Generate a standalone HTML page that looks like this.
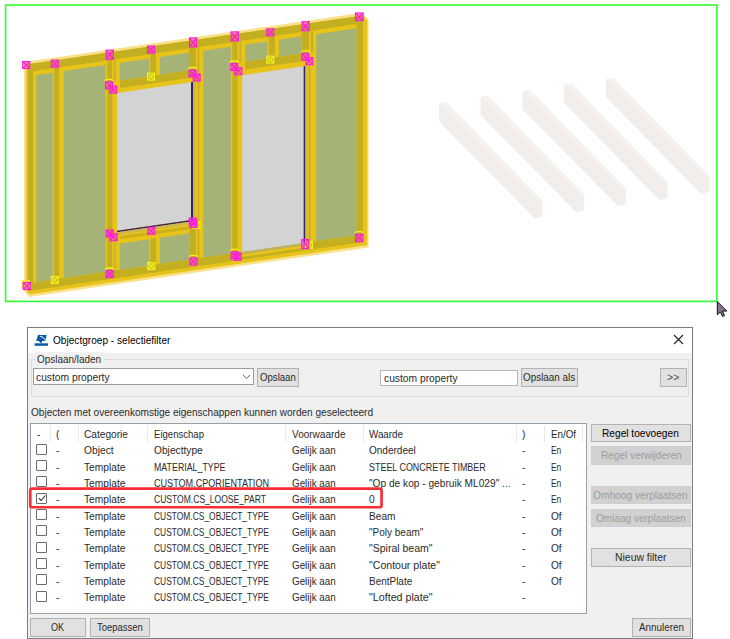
<!DOCTYPE html>
<html lang="nl"><head><meta charset="utf-8"><title>Objectgroep - selectiefilter</title>
<style>
html,body{margin:0;padding:0;background:#fff;}
body{width:730px;height:639px;position:relative;overflow:hidden;font-family:"Liberation Sans",sans-serif;font-size:11px;color:#2a2a2a;}
.cad{position:absolute;left:0;top:0;}
.dlg{position:absolute;left:26.8px;top:326.8px;width:664.5px;height:310.5px;background:#f0f0f0;border:1px solid #7c7c7c;box-sizing:content-box;}
.abs{position:absolute;left:0;top:0;width:730px;height:639px;}
.title{position:absolute;left:27.8px;top:327.8px;width:664.5px;height:25.2px;background:#fff;}
.t{position:absolute;white-space:nowrap;line-height:16px;height:16px;transform-origin:0 50%;}
.grp{position:absolute;left:30.8px;top:359px;width:658px;height:37.7px;border:1px solid #dcdcdc;box-sizing:border-box;}
.glb{position:absolute;left:35px;top:352px;width:69px;height:14px;background:#f0f0f0;}
.btn{position:absolute;box-sizing:border-box;border:1px solid #b2b2b2;background:#e1e1e1;}
.btn.d{border-color:#cfcfcf;background:#d1d1d1;}
.inp{position:absolute;box-sizing:border-box;border:1px solid #9c9c9c;background:#fff;}
.tbl{position:absolute;left:30px;top:422.5px;width:557px;height:191px;box-sizing:border-box;border:1px solid #9aa0a8;background:#fff;}
.sep{position:absolute;top:425px;width:1px;height:17px;background:#e9e9e9;}
.cb{position:absolute;width:11px;height:11px;box-sizing:border-box;border:1px solid #6a6a6a;border-radius:1px;background:#fff;}
.cb svg{position:absolute;left:-.5px;top:-.5px;}
.red{position:absolute;left:28.9px;top:487.2px;width:354px;height:21.4px;box-sizing:border-box;border:2.7px solid #f92d34;border-radius:3px;}
</style></head><body>
<svg class="cad" width="730" height="322" viewBox="0 0 730 322">
<defs>
<linearGradient id="gl" x1="0" x2="1" y1="0" y2="0"><stop offset="0" stop-color="#fdeaa8"/><stop offset="1" stop-color="#e8c319"/></linearGradient>
<linearGradient id="grr" x1="0" x2="1" y1="0" y2="0"><stop offset="0" stop-color="#e8c319"/><stop offset="1" stop-color="#fdeaa8"/></linearGradient>
</defs>
<rect x="5.6" y="5.0" width="711.3" height="296.4" fill="none" stroke="#2eff2e" stroke-width="1.6"/>
<g transform="translate(24.0,63.5) skewY(-8.306)">
<rect x="0.00" y="-1.40" width="344.50" height="235.60" fill="#fbe08a" />
<rect x="0.00" y="1.40" width="343.50" height="230.30" fill="#e8c319" />
<rect x="0.00" y="1.40" width="3.70" height="230.30" fill="url(#gl)" />
<rect x="342.30" y="1.40" width="2.20" height="230.30" fill="url(#grr)" />
<rect x="3.70" y="1.40" width="335.30" height="7.60" fill="#c3af1f" />
<rect x="3.70" y="220.20" width="335.30" height="7.80" fill="#c3af1f" />
<rect x="3.70" y="1.40" width="5.30" height="226.60" fill="#c3af1f" />
<rect x="30.00" y="1.40" width="5.30" height="226.60" fill="#c3af1f" />
<rect x="83.30" y="1.40" width="5.00" height="226.60" fill="#c3af1f" />
<rect x="208.30" y="1.40" width="5.20" height="226.60" fill="#c3af1f" />
<rect x="332.60" y="1.40" width="6.20" height="226.60" fill="#c3af1f" />
<rect x="12.30" y="13.40" width="16.40" height="206.80" fill="#a5b476" />
<rect x="39.80" y="13.40" width="41.70" height="206.80" fill="#a5b476" />
<rect x="179.30" y="13.40" width="27.50" height="206.80" fill="#a5b476" />
<rect x="292.20" y="13.40" width="40.40" height="206.80" fill="#a5b476" />
<rect x="95.90" y="13.40" width="29.20" height="17.60" fill="#a5b476" />
<rect x="136.00" y="13.40" width="29.00" height="17.60" fill="#a5b476" />
<rect x="126.30" y="9.00" width="5.70" height="22.00" fill="#c3af1f" />
<rect x="90.00" y="9.00" width="1.50" height="22.00" fill="#c3af1f" />
<rect x="165.00" y="9.00" width="7.00" height="29.50" fill="#c3af1f" />
<rect x="173.70" y="9.00" width="1.50" height="211.20" fill="#c3af1f" />
<rect x="95.90" y="31.00" width="69.10" height="7.50" fill="#c3af1f" />
<rect x="93.20" y="43.20" width="73.80" height="137.60" fill="#d3d3d3" />
<rect x="167.00" y="43.20" width="2.00" height="139.10" fill="#3a2060" />
<rect x="169.00" y="43.20" width="2.30" height="137.60" fill="#c9b24a" />
<rect x="93.20" y="180.80" width="75.80" height="1.50" fill="#3a2060" />
<rect x="93.20" y="182.30" width="73.80" height="2.70" fill="#cdb94e" />
<rect x="95.90" y="186.80" width="69.60" height="3.00" fill="#c9b01c" />
<rect x="95.90" y="194.00" width="29.20" height="26.20" fill="#a5b476" />
<rect x="136.00" y="194.00" width="29.50" height="26.20" fill="#a5b476" />
<rect x="126.30" y="194.00" width="5.70" height="26.20" fill="#c3af1f" />
<rect x="90.00" y="186.80" width="1.50" height="41.20" fill="#c3af1f" />
<rect x="165.50" y="186.80" width="6.50" height="41.20" fill="#c3af1f" />
<rect x="221.30" y="13.40" width="21.90" height="17.10" fill="#a5b476" />
<rect x="255.00" y="13.40" width="22.60" height="17.10" fill="#a5b476" />
<rect x="244.50" y="9.00" width="6.20" height="21.50" fill="#c3af1f" />
<rect x="215.50" y="9.00" width="1.50" height="21.50" fill="#c3af1f" />
<rect x="277.60" y="9.00" width="7.40" height="29.30" fill="#c3af1f" />
<rect x="287.00" y="9.00" width="2.00" height="21.50" fill="#c3af1f" />
<rect x="221.30" y="30.50" width="56.30" height="7.80" fill="#c3af1f" />
<rect x="218.20" y="43.60" width="61.50" height="176.70" fill="#d3d3d3" />
<rect x="279.70" y="43.60" width="1.60" height="176.70" fill="#3a2060" />
<rect x="281.30" y="43.60" width="1.70" height="176.70" fill="#c9b24a" />
<rect x="284.50" y="43.60" width="2.00" height="184.40" fill="#c3af1f" />
<rect x="218.20" y="220.30" width="62.80" height="2.50" fill="#bfb166" />
<rect x="218.20" y="222.80" width="62.80" height="2.50" fill="#e8c319" />
</g>
<polygon points="22,288.6 31.6,299.2 22,299.2" fill="#fff"/>
<polygon points="361.2,12.6 368.9,20.3 371,20.3 371,8 361.2,8" fill="#fff"/>
<path d="M361.6 13.6L368 20" stroke="#fbe08a" stroke-width="1.2" fill="none"/>
<path d="M24.2 289.4L31.4 297.3" stroke="#fbe08a" stroke-width="1.3" fill="none"/>
<g stroke="#ff1ae0" stroke-width="1.1" fill="rgba(255,40,225,0.38)"><rect x="22.7" y="61.5" width="7.0" height="7.0"/><path d="M22.7 61.5L29.7 68.5M29.7 61.5L22.7 68.5"/></g>
<g stroke="#ff1ae0" stroke-width="1.1" fill="rgba(255,40,225,0.38)"><rect x="51.3" y="60.1" width="7.0" height="7.0"/><path d="M51.3 60.1L58.3 67.1M58.3 60.1L51.3 67.1"/></g>
<g stroke="#ff1ae0" stroke-width="1.1" fill="rgba(255,40,225,0.38)"><rect x="106.1" y="50.2" width="7.2" height="9.0"/><path d="M106.1 50.2L113.3 59.2M113.3 50.2L106.1 59.2"/></g>
<g stroke="#ff1ae0" stroke-width="1.1" fill="rgba(255,40,225,0.38)"><rect x="147.5" y="46.1" width="7.0" height="7.0"/><path d="M147.5 46.1L154.5 53.1M154.5 46.1L147.5 53.1"/></g>
<g stroke="#ff1ae0" stroke-width="1.1" fill="rgba(255,40,225,0.38)"><rect x="189.5" y="37.9" width="7.0" height="9.0"/><path d="M189.5 37.9L196.5 46.9M196.5 37.9L189.5 46.9"/></g>
<g stroke="#ff1ae0" stroke-width="1.1" fill="rgba(255,40,225,0.38)"><rect x="231.1" y="31.9" width="7.2" height="9.0"/><path d="M231.1 31.9L238.3 40.9M238.3 31.9L231.1 40.9"/></g>
<g stroke="#ff1ae0" stroke-width="1.1" fill="rgba(255,40,225,0.38)"><rect x="266.8" y="28.8" width="7.0" height="7.0"/><path d="M266.8 28.8L273.8 35.8M273.8 28.8L266.8 35.8"/></g>
<g stroke="#ff1ae0" stroke-width="1.1" fill="rgba(255,40,225,0.38)"><rect x="302.1" y="21.7" width="7.0" height="9.0"/><path d="M302.1 21.7L309.1 30.7M309.1 21.7L302.1 30.7"/></g>
<g stroke="#ff1ae0" stroke-width="1.1" fill="rgba(255,40,225,0.38)"><rect x="355.5" y="13.0" width="7.6" height="7.6"/><path d="M355.5 13.0L363.1 20.6M363.1 13.0L355.5 20.6"/></g>
<g stroke="#f2f01c" stroke-width="1.1" fill="rgba(240,240,30,0.2)"><rect x="147.5" y="73.2" width="7.0" height="7.0"/><path d="M147.5 73.2L154.5 80.2M154.5 73.2L147.5 80.2"/></g>
<path d="M105.0 81.3q0 -2 2 -2h4q2 0 2 2" stroke="#f2f01c" stroke-width="1.3" fill="none"/>
<g stroke="#ff1ae0" stroke-width="1.1" fill="rgba(255,40,225,0.38)"><rect x="105.5" y="81.8" width="7.0" height="7.0"/><path d="M105.5 81.8L112.5 88.8M112.5 81.8L105.5 88.8"/></g>
<g stroke="#ff1ae0" stroke-width="1.1" fill="rgba(255,40,225,0.38)"><rect x="109.7" y="86.1" width="7.0" height="7.0"/><path d="M109.7 86.1L116.7 93.1M116.7 86.1L109.7 93.1"/></g>
<path d="M188.6 69.5q0 -2 2 -2h4q2 0 2 2" stroke="#f2f01c" stroke-width="1.3" fill="none"/>
<g stroke="#ff1ae0" stroke-width="1.1" fill="rgba(255,40,225,0.38)"><rect x="189.1" y="70.0" width="7.0" height="7.0"/><path d="M189.1 70.0L196.1 77.0M196.1 70.0L189.1 77.0"/></g>
<g stroke="#ff1ae0" stroke-width="1.1" fill="rgba(255,40,225,0.38)"><rect x="193.2" y="74.1" width="7.0" height="7.0"/><path d="M193.2 74.1L200.2 81.1M200.2 74.1L193.2 81.1"/></g>
<g stroke="#f2f01c" stroke-width="1.1" fill="rgba(240,240,30,0.2)"><rect x="266.8" y="56.1" width="7.0" height="7.0"/><path d="M266.8 56.1L273.8 63.1M273.8 56.1L266.8 63.1"/></g>
<path d="M230.3 63.0q0 -2 2 -2h4q2 0 2 2" stroke="#f2f01c" stroke-width="1.3" fill="none"/>
<g stroke="#ff1ae0" stroke-width="1.1" fill="rgba(255,40,225,0.38)"><rect x="230.8" y="63.5" width="7.0" height="7.0"/><path d="M230.8 63.5L237.8 70.5M237.8 63.5L230.8 70.5"/></g>
<g stroke="#ff1ae0" stroke-width="1.1" fill="rgba(255,40,225,0.38)"><rect x="234.9" y="67.7" width="7.0" height="7.0"/><path d="M234.9 67.7L241.9 74.7M241.9 67.7L234.9 74.7"/></g>
<path d="M301.3 52.8q0 -2 2 -2h4q2 0 2 2" stroke="#f2f01c" stroke-width="1.3" fill="none"/>
<g stroke="#ff1ae0" stroke-width="1.1" fill="rgba(255,40,225,0.38)"><rect x="301.8" y="53.3" width="7.0" height="7.0"/><path d="M301.8 53.3L308.8 60.3M308.8 53.3L301.8 60.3"/></g>
<g stroke="#ff1ae0" stroke-width="1.1" fill="rgba(255,40,225,0.38)"><rect x="305.9" y="57.7" width="7.0" height="7.0"/><path d="M305.9 57.7L312.9 64.7M312.9 57.7L305.9 64.7"/></g>
<g stroke="#ff1ae0" stroke-width="1.1" fill="rgba(255,40,225,0.38)"><rect x="106.2" y="230.0" width="7.0" height="7.0"/><path d="M106.2 230.0L113.2 237.0M113.2 230.0L106.2 237.0"/></g>
<g stroke="#ff1ae0" stroke-width="1.1" fill="rgba(255,40,225,0.38)"><rect x="110.1" y="233.7" width="7.0" height="7.0"/><path d="M110.1 233.7L117.1 240.7M117.1 233.7L110.1 240.7"/></g>
<g stroke="#ff1ae0" stroke-width="1.1" fill="rgba(255,40,225,0.38)"><rect x="147.8" y="227.3" width="7.0" height="7.0"/><path d="M147.8 227.3L154.8 234.3M154.8 227.3L147.8 234.3"/></g>
<g stroke="#f2f01c" stroke-width="1.1" fill="rgba(240,240,30,0.2)"><rect x="193.0" y="221.5" width="7.0" height="7.0"/><path d="M193.0 221.5L200.0 228.5M200.0 221.5L193.0 228.5"/></g>
<g stroke="#ff1ae0" stroke-width="1.1" fill="rgba(255,40,225,0.38)"><rect x="189.2" y="218.0" width="7.0" height="7.0"/><path d="M189.2 218.0L196.2 225.0M196.2 218.0L189.2 225.0"/></g>
<g stroke="#ff1ae0" stroke-width="1.1" fill="rgba(255,40,225,0.38)"><rect x="190.0" y="220.5" width="7.0" height="7.0"/><path d="M190.0 220.5L197.0 227.5M197.0 220.5L190.0 227.5"/></g>
<g stroke="#f2f01c" stroke-width="1.1" fill="rgba(240,240,30,0.2)"><rect x="22.2" y="280.5" width="7.0" height="7.0"/><path d="M22.2 280.5L29.2 287.5M29.2 280.5L22.2 287.5"/></g>
<g stroke="#ff1ae0" stroke-width="1.1" fill="rgba(255,40,225,0.38)"><rect x="23.2" y="282.5" width="7.0" height="7.0"/><path d="M23.2 282.5L30.2 289.5M30.2 282.5L23.2 289.5"/></g>
<g stroke="#f2f01c" stroke-width="1.1" fill="rgba(240,240,30,0.2)"><rect x="51.3" y="276.5" width="7.0" height="7.0"/><path d="M51.3 276.5L58.3 283.5M58.3 276.5L51.3 283.5"/></g>
<path d="M105.7 270.0q0 -2 2 -2h4q2 0 2 2" stroke="#f2f01c" stroke-width="1.3" fill="none"/>
<g stroke="#ff1ae0" stroke-width="1.1" fill="rgba(255,40,225,0.38)"><rect x="106.2" y="270.5" width="7.0" height="7.0"/><path d="M106.2 270.5L113.2 277.5M113.2 270.5L106.2 277.5"/></g>
<g stroke="#f2f01c" stroke-width="1.1" fill="rgba(240,240,30,0.2)"><rect x="147.8" y="262.5" width="7.0" height="7.0"/><path d="M147.8 262.5L154.8 269.5M154.8 262.5L147.8 269.5"/></g>
<path d="M189.5 257.4q0 -2 2 -2h4q2 0 2 2" stroke="#f2f01c" stroke-width="1.3" fill="none"/>
<g stroke="#ff1ae0" stroke-width="1.1" fill="rgba(255,40,225,0.38)"><rect x="190.0" y="257.9" width="7.0" height="7.0"/><path d="M190.0 257.9L197.0 264.9M197.0 257.9L190.0 264.9"/></g>
<path d="M230.6 251.3q0 -2 2 -2h4q2 0 2 2" stroke="#f2f01c" stroke-width="1.3" fill="none"/>
<g stroke="#ff1ae0" stroke-width="1.1" fill="rgba(255,40,225,0.38)"><rect x="231.1" y="251.8" width="7.0" height="7.0"/><path d="M231.1 251.8L238.1 258.8M238.1 251.8L231.1 258.8"/></g>
<g stroke="#ff1ae0" stroke-width="1.1" fill="rgba(255,40,225,0.38)"><rect x="234.1" y="253.3" width="7.0" height="7.0"/><path d="M234.1 253.3L241.1 260.3M241.1 253.3L234.1 260.3"/></g>
<g stroke="#f2f01c" stroke-width="1.1" fill="rgba(240,240,30,0.2)"><rect x="305.5" y="241.5" width="7.0" height="7.0"/><path d="M305.5 241.5L312.5 248.5M312.5 241.5L305.5 248.5"/></g>
<g stroke="#ff1ae0" stroke-width="1.1" fill="rgba(255,40,225,0.38)"><rect x="301.8" y="239.5" width="7.0" height="9.0"/><path d="M301.8 239.5L308.8 248.5M308.8 239.5L301.8 248.5"/></g>
<path d="M355.0 233.7q0 -2 2 -2h4q2 0 2 2" stroke="#f2f01c" stroke-width="1.3" fill="none"/>
<g stroke="#ff1ae0" stroke-width="1.1" fill="rgba(255,40,225,0.38)"><rect x="355.5" y="234.2" width="7.5" height="7.5"/><path d="M355.5 234.2L363.0 241.7M363.0 234.2L355.5 241.7"/></g>
<polygon points="439.0,104.5 441.0,103.0 446.4,102.3 542.6,200.7 542.6,215.6 540.5,217.4 534.6,218.4 439.0,121.6" fill="#f1eeeb"/>
<polygon points="441.0,103.0 446.4,102.3 542.6,200.7 540.0,202.5" fill="#f5f2ef"/>
<polygon points="480.6,98.3 482.6,96.8 488.0,96.1 584.2,194.5 584.2,209.4 582.1,211.2 576.2,212.2 480.6,115.4" fill="#f1eeeb"/>
<polygon points="482.6,96.8 488.0,96.1 584.2,194.5 581.6,196.3" fill="#f5f2ef"/>
<polygon points="522.3,92.2 524.3,90.7 529.7,90.0 625.9,188.4 625.9,203.3 623.8,205.1 617.9,206.1 522.3,109.3" fill="#f1eeeb"/>
<polygon points="524.3,90.7 529.7,90.0 625.9,188.4 623.3,190.2" fill="#f5f2ef"/>
<polygon points="564.0,86.0 566.0,84.5 571.3,83.8 667.5,182.2 667.5,197.1 665.5,198.9 659.5,199.9 564.0,103.1" fill="#f1eeeb"/>
<polygon points="566.0,84.5 571.3,83.8 667.5,182.2 665.0,184.1" fill="#f5f2ef"/>
<polygon points="605.6,79.9 607.6,78.4 613.0,77.7 709.2,176.1 709.2,191.0 707.1,192.8 701.2,193.8 605.6,97.0" fill="#f1eeeb"/>
<polygon points="607.6,78.4 613.0,77.7 709.2,176.1 706.6,177.9" fill="#f5f2ef"/>
<path d="M717.3 301.6v13.2l3.1-2.9 2.1 4.6 2-0.9-2.1-4.5h4.4z" fill="#85768f" stroke="#111" stroke-width="1" stroke-linejoin="miter"/>
</svg>
<div class="dlg"></div>
<div class="abs">
<div class="title"></div>
<svg style="position:absolute;left:34px;top:334px" width="15" height="13" viewBox="34 334 15 13"><polygon points="38,335.1 46.7,335.1 45.2,341.1 36.2,341.1" fill="#0a5ba6"/><path d="M40.2 336.3q3.6 0.4 4.6 3.4" stroke="#fff" stroke-width="1" fill="none"/><polygon points="38.6,341.1 42.2,341.1 41.3,343.4" fill="#0a5ba6"/><rect x="34.7" y="343.3" width="13.4" height="2.5" fill="#0a5ba6"/></svg>
<span class="t " style="left:53.0px;top:331.5px;transform:scaleX(0.9188);color:#000;">Objectgroep - selectiefilter</span>
<svg style="position:absolute;left:673px;top:334px" width="11" height="11" viewBox="0 0 11 11"><path d="M1 1l9 9M10 1l-9 9" stroke="#222" stroke-width="1.1" fill="none"/></svg>
<div class="grp"></div>
<div class="glb"></div>
<span class="t " style="left:37.2px;top:350.7px;transform:scaleX(0.9022);">Opslaan/laden</span>
<div class="inp" style="left:33px;top:368px;width:221px;height:17px"></div>
<span class="t " style="left:36.4px;top:368.6px;transform:scaleX(0.9333);">custom property</span>
<svg style="position:absolute;left:242.3px;top:374.3px" width="9" height="6" viewBox="0 0 9 6"><path d="M1 1l3.5 3.4L8 1" stroke="#666" stroke-width="1" fill="none"/></svg>
<div class="inp" style="left:380px;top:370px;width:137.5px;height:15.5px;border-color:#b5b5b5"></div>
<span class="t " style="left:384.1px;top:369.8px;transform:scaleX(0.9333);">custom property</span>
<div class="btn" style="left:659.5px;top:368px;width:27px;height:18.5px"></div>
<span class="t " style="left:667.1px;top:369.2px;transform:scaleX(0.9574);color:#4a4a4a;">&gt;&gt;</span>
<span class="t " style="left:30.9px;top:403.9px;transform:scaleX(0.9139);">Objecten met overeenkomstige eigenschappen kunnen worden geselecteerd</span>
<div class="tbl"></div>
<span class="t " style="left:36.5px;top:425.8px;transform:scaleX(0.9200);">-</span>
<span class="t " style="left:55.6px;top:425.8px;transform:scaleX(0.9200);">(</span>
<span class="t " style="left:84.1px;top:425.8px;transform:scaleX(0.9205);">Categorie</span>
<span class="t " style="left:153.6px;top:425.8px;transform:scaleX(0.8698);">Eigenschap</span>
<span class="t " style="left:291.8px;top:425.8px;transform:scaleX(0.9114);">Voorwaarde</span>
<span class="t " style="left:369.3px;top:425.8px;transform:scaleX(0.8922);">Waarde</span>
<span class="t " style="left:521.6px;top:425.8px;transform:scaleX(0.9200);">)</span>
<span class="t " style="left:551.0px;top:425.8px;transform:scaleX(0.8889);">En/Of</span>
<i class="sep" style="left:49.8px"></i>
<i class="sep" style="left:77.9px"></i>
<i class="sep" style="left:147.0px"></i>
<i class="sep" style="left:285.0px"></i>
<i class="sep" style="left:363.3px"></i>
<i class="sep" style="left:515.9px"></i>
<i class="sep" style="left:544.3px"></i>
<i class="sep" style="left:582.0px"></i>
<i class="cb" style="left:36.4px;top:443.7px"></i>
<span class="t " style="left:56.2px;top:442.4px;transform:scaleX(0.9200);">-</span>
<span class="t " style="left:84.1px;top:442.4px;transform:scaleX(0.9311);">Object</span>
<span class="t " style="left:153.6px;top:442.4px;transform:scaleX(0.9281);">Objecttype</span>
<span class="t " style="left:291.8px;top:442.4px;transform:scaleX(0.8934);">Gelijk aan</span>
<span class="t " style="left:369.3px;top:442.4px;transform:scaleX(0.9111);">Onderdeel</span>
<span class="t " style="left:522.1px;top:442.4px;transform:scaleX(0.9200);">-</span>
<span class="t " style="left:551.0px;top:442.4px;transform:scaleX(0.7655);">En</span>
<i class="cb" style="left:36.4px;top:460.0px"></i>
<span class="t " style="left:56.2px;top:458.7px;transform:scaleX(0.9200);">-</span>
<span class="t " style="left:84.1px;top:458.7px;transform:scaleX(0.9276);">Template</span>
<span class="t " style="left:153.6px;top:458.7px;transform:scaleX(0.8030);">MATERIAL_TYPE</span>
<span class="t " style="left:291.8px;top:458.7px;transform:scaleX(0.8934);">Gelijk aan</span>
<span class="t " style="left:369.3px;top:458.7px;transform:scaleX(0.8125);">STEEL CONCRETE TIMBER</span>
<span class="t " style="left:522.1px;top:458.7px;transform:scaleX(0.9200);">-</span>
<span class="t " style="left:551.0px;top:458.7px;transform:scaleX(0.7655);">En</span>
<i class="cb" style="left:36.4px;top:476.4px"></i>
<span class="t " style="left:56.2px;top:475.0px;transform:scaleX(0.9200);">-</span>
<span class="t " style="left:84.1px;top:475.0px;transform:scaleX(0.9276);">Template</span>
<span class="t " style="left:153.6px;top:475.0px;transform:scaleX(0.8253);">CUSTOM.CPORIENTATION</span>
<span class="t " style="left:291.8px;top:475.0px;transform:scaleX(0.8934);">Gelijk aan</span>
<span class="t " style="left:369.3px;top:475.0px;transform:scaleX(0.9229);">"Op de kop - gebruik ML029" ...</span>
<span class="t " style="left:522.1px;top:475.0px;transform:scaleX(0.9200);">-</span>
<span class="t " style="left:551.0px;top:475.0px;transform:scaleX(0.7655);">En</span>
<i class="cb on" style="left:36.4px;top:492.7px"><svg width="10" height="10" viewBox="0 0 10 10"><path d="M1.8 5.2l2.3 2.3l4.2-5" stroke="#333" stroke-width="1.1" fill="none"/></svg></i>
<span class="t " style="left:56.2px;top:491.4px;transform:scaleX(0.9200);">-</span>
<span class="t " style="left:84.1px;top:491.4px;transform:scaleX(0.9276);">Template</span>
<span class="t " style="left:153.6px;top:491.4px;transform:scaleX(0.7764);">CUSTOM.CS_LOOSE_PART</span>
<span class="t " style="left:291.8px;top:491.4px;transform:scaleX(0.8934);">Gelijk aan</span>
<span class="t " style="left:369.3px;top:491.4px;transform:scaleX(0.9200);">0</span>
<span class="t " style="left:522.1px;top:491.4px;transform:scaleX(0.9200);">-</span>
<span class="t " style="left:551.0px;top:491.4px;transform:scaleX(0.7655);">En</span>
<i class="cb" style="left:36.4px;top:509.0px"></i>
<span class="t " style="left:56.2px;top:507.7px;transform:scaleX(0.9200);">-</span>
<span class="t " style="left:84.1px;top:507.7px;transform:scaleX(0.9276);">Template</span>
<span class="t " style="left:153.6px;top:507.7px;transform:scaleX(0.7658);">CUSTOM.CS_OBJECT_TYPE</span>
<span class="t " style="left:291.8px;top:507.7px;transform:scaleX(0.8934);">Gelijk aan</span>
<span class="t " style="left:369.3px;top:507.7px;transform:scaleX(0.9222);">Beam</span>
<span class="t " style="left:522.1px;top:507.7px;transform:scaleX(0.9200);">-</span>
<span class="t " style="left:551.0px;top:507.7px;transform:scaleX(0.9200);">Of</span>
<i class="cb" style="left:36.4px;top:525.4px"></i>
<span class="t " style="left:56.2px;top:524.0px;transform:scaleX(0.9200);">-</span>
<span class="t " style="left:84.1px;top:524.0px;transform:scaleX(0.9276);">Template</span>
<span class="t " style="left:153.6px;top:524.0px;transform:scaleX(0.7658);">CUSTOM.CS_OBJECT_TYPE</span>
<span class="t " style="left:291.8px;top:524.0px;transform:scaleX(0.8934);">Gelijk aan</span>
<span class="t " style="left:369.3px;top:524.0px;transform:scaleX(0.9100);">"Poly beam"</span>
<span class="t " style="left:522.1px;top:524.0px;transform:scaleX(0.9200);">-</span>
<span class="t " style="left:551.0px;top:524.0px;transform:scaleX(0.9200);">Of</span>
<i class="cb" style="left:36.4px;top:541.7px"></i>
<span class="t " style="left:56.2px;top:540.4px;transform:scaleX(0.9200);">-</span>
<span class="t " style="left:84.1px;top:540.4px;transform:scaleX(0.9276);">Template</span>
<span class="t " style="left:153.6px;top:540.4px;transform:scaleX(0.7658);">CUSTOM.CS_OBJECT_TYPE</span>
<span class="t " style="left:291.8px;top:540.4px;transform:scaleX(0.8934);">Gelijk aan</span>
<span class="t " style="left:369.3px;top:540.4px;transform:scaleX(0.9549);">"Spiral beam"</span>
<span class="t " style="left:522.1px;top:540.4px;transform:scaleX(0.9200);">-</span>
<span class="t " style="left:551.0px;top:540.4px;transform:scaleX(0.9200);">Of</span>
<i class="cb" style="left:36.4px;top:558.0px"></i>
<span class="t " style="left:56.2px;top:556.7px;transform:scaleX(0.9200);">-</span>
<span class="t " style="left:84.1px;top:556.7px;transform:scaleX(0.9276);">Template</span>
<span class="t " style="left:153.6px;top:556.7px;transform:scaleX(0.7658);">CUSTOM.CS_OBJECT_TYPE</span>
<span class="t " style="left:291.8px;top:556.7px;transform:scaleX(0.8934);">Gelijk aan</span>
<span class="t " style="left:369.3px;top:556.7px;transform:scaleX(0.9614);">"Contour plate"</span>
<span class="t " style="left:522.1px;top:556.7px;transform:scaleX(0.9200);">-</span>
<span class="t " style="left:551.0px;top:556.7px;transform:scaleX(0.9200);">Of</span>
<i class="cb" style="left:36.4px;top:574.3px"></i>
<span class="t " style="left:56.2px;top:573.0px;transform:scaleX(0.9200);">-</span>
<span class="t " style="left:84.1px;top:573.0px;transform:scaleX(0.9276);">Template</span>
<span class="t " style="left:153.6px;top:573.0px;transform:scaleX(0.7658);">CUSTOM.CS_OBJECT_TYPE</span>
<span class="t " style="left:291.8px;top:573.0px;transform:scaleX(0.8934);">Gelijk aan</span>
<span class="t " style="left:369.3px;top:573.0px;transform:scaleX(0.9057);">BentPlate</span>
<span class="t " style="left:522.1px;top:573.0px;transform:scaleX(0.9200);">-</span>
<span class="t " style="left:551.0px;top:573.0px;transform:scaleX(0.9200);">Of</span>
<i class="cb" style="left:36.4px;top:590.7px"></i>
<span class="t " style="left:56.2px;top:589.4px;transform:scaleX(0.9200);">-</span>
<span class="t " style="left:84.1px;top:589.4px;transform:scaleX(0.9276);">Template</span>
<span class="t " style="left:153.6px;top:589.4px;transform:scaleX(0.7658);">CUSTOM.CS_OBJECT_TYPE</span>
<span class="t " style="left:291.8px;top:589.4px;transform:scaleX(0.8934);">Gelijk aan</span>
<span class="t " style="left:369.3px;top:589.4px;transform:scaleX(0.9725);">"Lofted plate"</span>
<span class="t " style="left:522.1px;top:589.4px;transform:scaleX(0.9200);">-</span>
<svg style="position:absolute;left:0;top:480px" width="400" height="40" viewBox="0 480 400 40"><rect x="30.25" y="488.55" width="351.3" height="18.7" rx="2" ry="2" fill="none" stroke="#f92d34" stroke-width="2.7"/></svg>
<div class="btn" style="left:257px;top:368px;width:42.0px;height:18.5px"></div><span class="t " style="left:260.1px;top:369.3px;transform:scaleX(0.8738);color:#2a2a2a;">Opslaan</span>
<div class="btn" style="left:521px;top:368px;width:56.5px;height:18.5px"></div><span class="t " style="left:523.1px;top:369.3px;transform:scaleX(0.8987);color:#2a2a2a;">Opslaan als</span>
<div class="btn" style="left:591px;top:423.5px;width:99.5px;height:18.5px"></div><span class="t " style="left:602.4px;top:424.8px;transform:scaleX(0.9234);color:#000;">Regel toevoegen</span>
<div class="btn d" style="left:591px;top:446px;width:99.5px;height:18.5px"></div><span class="t " style="left:600.5px;top:447.3px;transform:scaleX(0.9155);color:#9c9c9c;">Regel verwijderen</span>
<div class="btn d" style="left:591px;top:485.5px;width:99.5px;height:18.5px"></div><span class="t " style="left:593.4px;top:486.8px;transform:scaleX(0.9274);color:#9c9c9c;">Omhoog verplaatsen</span>
<div class="btn d" style="left:591px;top:508.5px;width:99.5px;height:18.5px"></div><span class="t " style="left:595.9px;top:509.8px;transform:scaleX(0.9123);color:#9c9c9c;">Omlaag verplaatsen</span>
<div class="btn" style="left:591px;top:548px;width:99.5px;height:18.5px"></div><span class="t " style="left:615.0px;top:549.3px;transform:scaleX(0.9467);color:#2a2a2a;">Nieuw filter</span>
<div class="btn" style="left:30px;top:618px;width:55.5px;height:18.5px"></div><span class="t " style="left:51.2px;top:619.3px;transform:scaleX(0.8242);color:#2a2a2a;">OK</span>
<div class="btn" style="left:90px;top:618px;width:60.0px;height:18.5px"></div><span class="t " style="left:97.0px;top:619.3px;transform:scaleX(0.8627);color:#2a2a2a;">Toepassen</span>
<div class="btn" style="left:632px;top:618px;width:58.5px;height:18.5px"></div><span class="t " style="left:638.8px;top:619.3px;transform:scaleX(0.8974);color:#2a2a2a;">Annuleren</span>
</div>
</body></html>
